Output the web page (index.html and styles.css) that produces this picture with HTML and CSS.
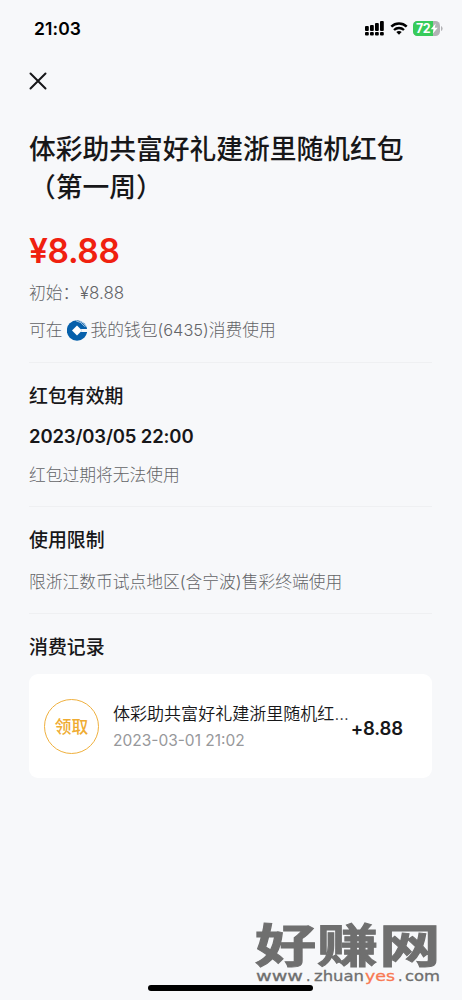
FILE: index.html
```html
<!DOCTYPE html>
<html lang="zh-CN">
<head>
<meta charset="utf-8">
<meta name="viewport" content="width=device-width">
<title>红包详情</title>
<link rel="stylesheet" href="styles.css">
</head>
<body>
<div class="screen">
  <header class="status">
    <span class="time">21:03</span>
    <div class="indicators">
      <svg class="signal" width="19" height="15" viewBox="0 0 19 15">
        <rect x="0" y="5" width="3.8" height="5" rx="1"/><rect x="5" y="4" width="3.8" height="6" rx="1"/><rect x="10" y="2" width="3.8" height="8" rx="1"/><rect x="15" y="0" width="3.8" height="10" rx="1"/>
        <rect x="0" y="11" width="3.8" height="3.6" rx="1"/><rect x="5" y="11" width="3.8" height="3.6" rx="1"/><rect x="10" y="11" width="3.8" height="3.6" rx="1"/><rect x="15" y="11" width="3.8" height="3.6" rx="1"/>
      </svg>
      <svg class="wifi" width="18" height="13" viewBox="0 0 18 13">
        <path d="M1.300 4.600C5.700.4 12.300.4 16.700 4.600" fill="none" stroke="#000" stroke-width="2.5"/>
        <path d="M4 8C6.800 5.300 11.200 5.300 14 8" fill="none" stroke="#000" stroke-width="2.3"/>
        <path d="M6.300 10C7.800 8.600 10.200 8.600 11.700 10L9 12.800Z"/>
      </svg>
      <svg class="battery" width="30" height="15" viewBox="0 0 30 15">
        <rect x="0" y="0" width="27" height="15" rx="4.5" fill="#b2b2b5"/>
        <path d="M4.500 0H20V15H4.500A4.500 4.500 0 0 1 0 10.500V4.500A4.500 4.500 0 0 1 4.500 0Z" fill="#37cb5a"/>
        <path d="M28 5Q29.600 5.500 29.600 7.500T28 10Z" fill="#b2b2b5"/>
        <text x="3" y="12" class="level">72</text>
        <path d="M22.700 2.500L17.700 8.300H20.700L19.700 12.700L24.800 6.700H21.700Z" fill="#fff"/>
      </svg>
    </div>
  </header>
  <nav class="nav">
    <svg width="18" height="18" viewBox="0 0 18 18"><path d="M1.500 1.500L16.500 16.500M16.500 1.500L1.500 16.500" fill="none" stroke="#171719" stroke-width="2" stroke-linecap="round"/></svg>
  </nav>
  <main class="content">
    <section class="summary">
      <h1 class="title">体彩助共富好礼建浙里随机红包<br>（第一周）</h1>
      <div class="amount">¥8.88</div>
      <div class="muted initial">初始：<span class="num">¥8.88</span></div>
      <div class="muted wallet">可在
        <svg class="bank" width="20" height="21" viewBox="0 0 20 21">
          <circle cx="10" cy="10.500" r="10.200" fill="#0660ab"/>
          <path d="M10 5.500L15 10.500L10 15.500L5 10.500Z" fill="#fff"/>
          <path d="M13.500 9L15 10.500L13.500 12H20V9Z" fill="#f7f8fa"/>
          <path d="M9 .8Q14 1.500 17.700 6.500M12.500 .7Q17 2.300 19.500 7" fill="none" stroke="#f7f8fa" stroke-width=".7"/>
        </svg>
        <span>我的钱包<span class="card-no">(6435)</span>消费使用</span>
      </div>
    </section>
    <section class="validity">
      <h2 class="heading">红包有效期</h2>
      <div class="date">2023/03/05 22:00</div>
      <p class="muted note">红包过期将无法使用</p>
    </section>
    <section class="limits">
      <h2 class="heading">使用限制</h2>
      <p class="muted note">限浙江数币试点地区(含宁波)售彩终端使用</p>
    </section>
    <section class="records">
      <h2 class="heading">消费记录</h2>
      <div class="record">
        <div class="badge">领取</div>
        <div class="info">
          <div class="name">体彩助共富好礼建浙里随机红<span class="dots">...</span></div>
          <div class="when">2023-03-01 21:02</div>
        </div>
        <div class="change">+8.88</div>
      </div>
    </section>
  </main>
  <div class="home-bar"></div>
  <svg class="watermark" width="200" height="85" viewBox="0 -10 200 85">
    <text class="mark-name" transform="translate(2 47) scale(1.330 1)" x="0" y="0">好赚网</text>
    <g class="mark-url">
      <text x="3" y="66" textLength="47" lengthAdjust="spacingAndGlyphs">www</text>
      <text x="53" y="66">.</text>
      <text x="61" y="66" textLength="50" lengthAdjust="spacingAndGlyphs">zhuan</text>
      <text x="112" y="66" textLength="30" lengthAdjust="spacingAndGlyphs" class="accent">yes</text>
      <text x="145" y="66">.</text>
      <text x="152" y="66" textLength="35" lengthAdjust="spacingAndGlyphs">com</text>
    </g>
  </svg>
</div>
</body>
</html>
```

FILE: styles.css
```css
* { box-sizing: border-box; }
body {
  margin: 0;
  background: #f7f8fa;
  color: #171719;
  font-family: Inter, "Noto Sans CJK SC", sans-serif;
}
h1, h2, p { margin: 0; font-weight: 500; }
svg { display: block; flex: none; }
.screen { position: relative; width: 462px; height: 1000px; overflow: hidden; }

.status {
  display: flex;
  align-items: center;
  justify-content: space-between;
  height: 56px;
  padding: 0 19px 0 34px;
  color: #000;
}
.time { font-size: 17.500px; font-weight: 600; letter-spacing: .1px; }
.indicators { display: flex; align-items: center; gap: 6px; }
.wifi { margin-right: -1px; }
.level { font: 700 12.500px Inter, sans-serif; fill: #fff; letter-spacing: -.6px; }
.nav { display: flex; align-items: center; height: 50px; padding-left: 28.500px; }

.content { padding: 24px 30px 0 29px; }
.title {
  font-size: 26.750px;
  line-height: 38px;
  white-space: nowrap;
}
.amount {
  height: 46px;
  margin-top: 22px;
  line-height: 46px;
  font-size: 33.500px;
  font-weight: 600;
  color: #f0200f;
  letter-spacing: -.35px;
}
.muted { font-size: 16.750px; line-height: 26px; color: #636467; font-weight: 300; white-space: nowrap; }
.initial { margin-top: 6px; }
.num { margin-left: .5px; font-size: 17px; }
.wallet { display: flex; align-items: center; gap: 4px; margin-top: 11px; }
.card-no { font-size: 16.400px; }
.summary { height: 233px; border-bottom: 1px solid #eff0f2; }
.validity { height: 144px; padding-top: 20px; border-bottom: 1px solid #eff0f2; }
.limits { height: 107px; padding-top: 20px; border-bottom: 1px solid #eff0f2; }
.records { padding-top: 20px; }
.heading { font-size: 18.900px; line-height: 28px; }
.date { margin-top: 12px; font-size: 18.500px; line-height: 26px; font-weight: 600; letter-spacing: -.15px; white-space: nowrap; }
.date + .note { margin-top: 13px; }
.heading + .note { margin-top: 14px; }

.record {
  display: flex;
  align-items: center;
  height: 104px;
  margin-top: 12px;
  padding: 0 29px 0 15px;
  border-radius: 9px;
  background: #fff;
}
.badge {
  display: flex;
  align-items: center;
  justify-content: center;
  width: 55px;
  height: 55px;
  border: 1.500px solid #efb03e;
  border-radius: 50%;
  color: #efac32;
  font-size: 16.700px;
  font-weight: 500;
}
.info { flex: 1; margin-left: 14px; padding-top: 2px; white-space: nowrap; }
.name { font-size: 17.050px; line-height: 27px; font-weight: 350; }
.when { font-size: 15.500px; line-height: 27px; color: #97989b; }
.change { padding-top: 3px; font-size: 18.500px; font-weight: 600; letter-spacing: -.15px; }

.home-bar {
  position: absolute;
  left: 148px;
  top: 985px;
  width: 165px;
  height: 6px;
  border-radius: 3px;
  background: #000;
}
.watermark { position: absolute; left: 253px; top: 905px; }
.mark-name { font: 700 46px "Noto Sans CJK SC", sans-serif; fill: #6f6f6f; stroke: #6f6f6f; stroke-width: 1px; letter-spacing: .7px; }
.mark-url { font: 400 14px "DejaVu Sans", sans-serif; fill: #6f6f6f; stroke: #6f6f6f; stroke-width: .3px; }
.accent { fill: #f87953; stroke: #f87953; }
```
